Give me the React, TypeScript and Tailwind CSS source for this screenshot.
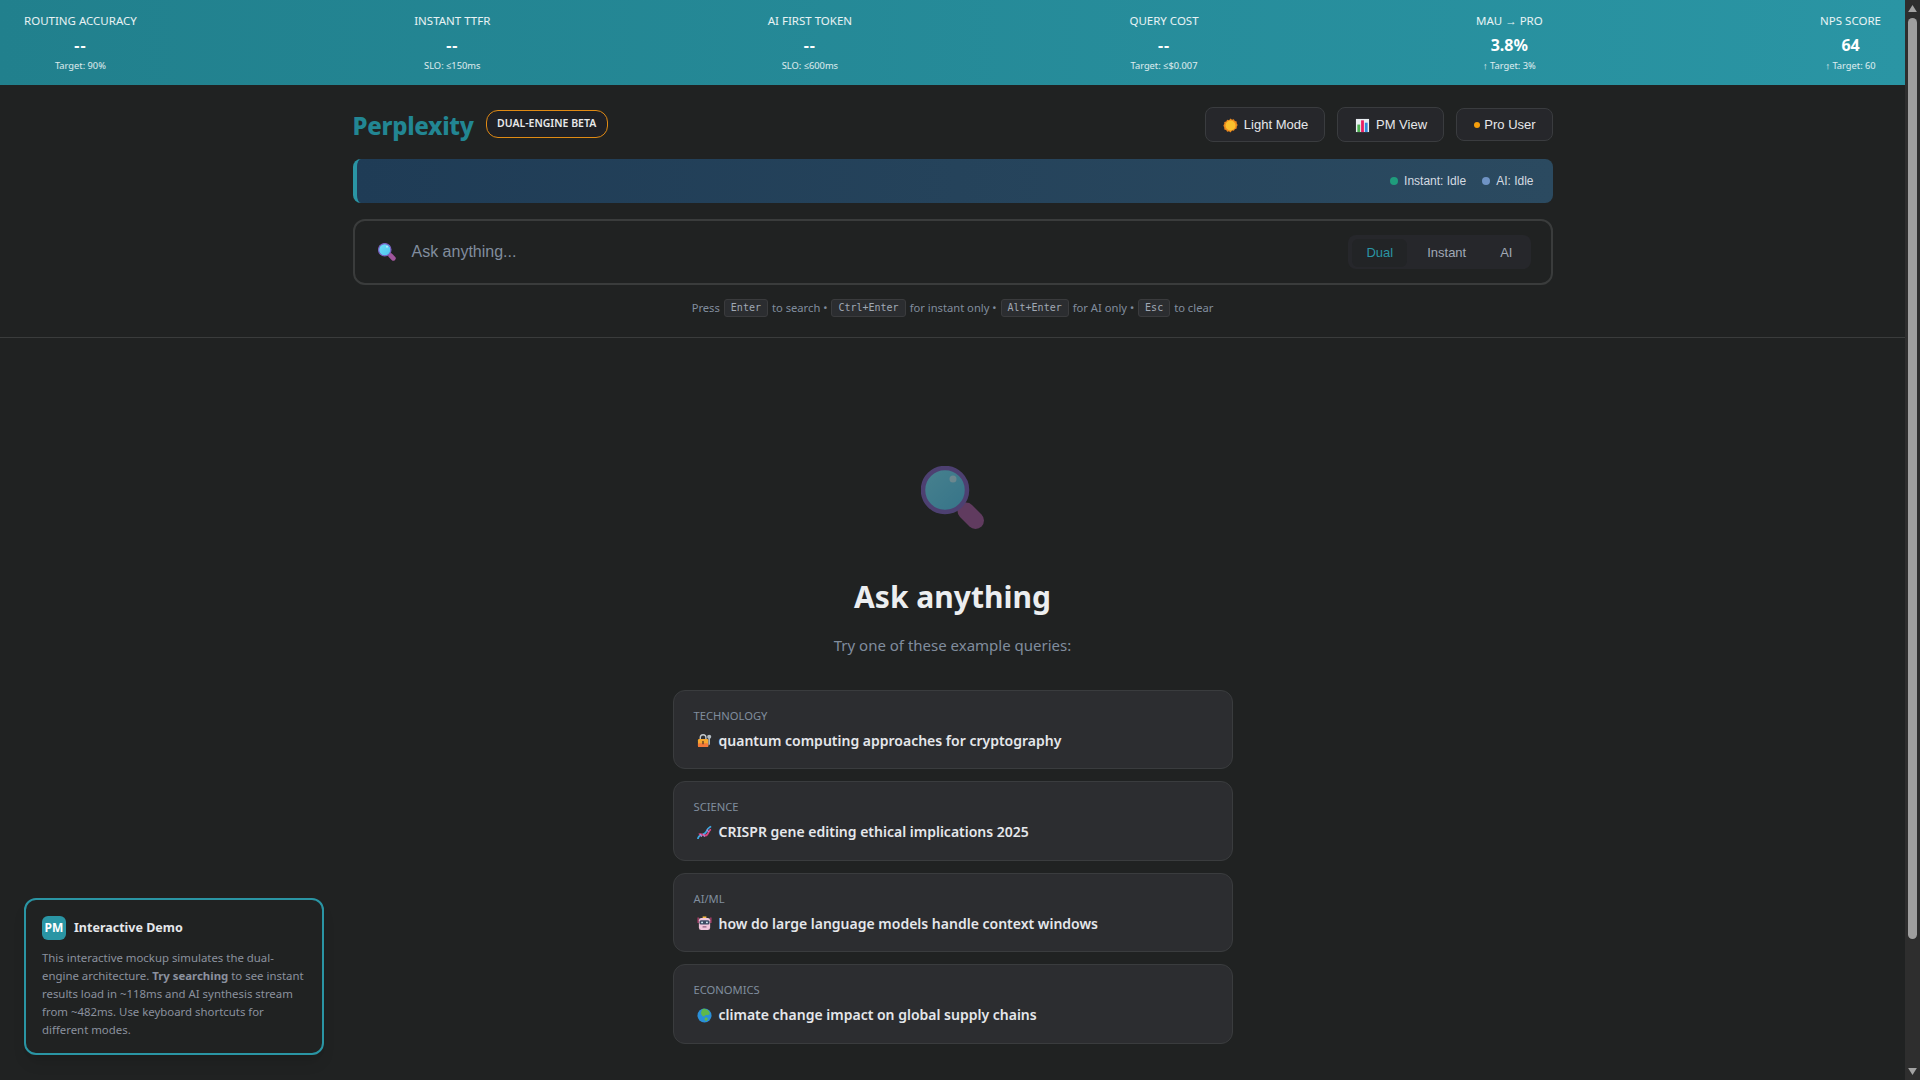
const SANS = "font-['Noto_Sans','Open_Sans',sans-serif]";

const metrics = [
  { label: <>Routing Accuracy</>, value: "--", sub: "Target: 90%" },
  { label: <>Instant TTFR</>, value: "--", sub: "SLO: ≤150ms" },
  { label: <>AI First Token</>, value: "--", sub: "SLO: ≤600ms" },
  { label: <>Query Cost</>, value: "--", sub: "Target: ≤$0.007" },
  { label: <>MAU <span className="font-['Liberation_Sans',sans-serif]">→</span> Pro</>, value: "3.8%", sub: "↑ Target: 3%" },
  { label: <>NPS Score</>, value: "64", sub: "↑ Target: 60" },
];

function Magnifier({ className, id }: { className: string; id: string }) {
  return (
    <svg viewBox="0 0 64 64" className={className}>
      <defs>
        <linearGradient id={id} x1="0" y1="0" x2="1" y2="1">
          <stop offset="0" stopColor="#6fe0fa" />
          <stop offset="1" stopColor="#4cc4ee" />
        </linearGradient>
      </defs>
      <line x1="45" y1="45" x2="54.500" y2="54.500" stroke="#a0559c" strokeWidth="17" strokeLinecap="round" />
      <circle cx="24" cy="24" r="22" fill={`url(#${id})`} stroke="#7a5fc0" strokeWidth="4.500" />
      <circle cx="32" cy="13" r="3.500" fill="#ffffff" fillOpacity="0.55" />
    </svg>
  );
}

function Sun() {
  return (
    <svg viewBox="0 0 16 16" className="h-[15px] w-[15px] shrink-0">
      <path d="M8 0.500l1.600 1.300 2-.5 1 1.800 2 .6 0 2 1 1.800-1 1.800 0 2-2 .6-1 1.800-2-.5L8 15.500l-1.600-1.300-2 .5-1-1.800-2-.6 0-2L.4 8l1-1.800 0-2 2-.6 1-1.800 2 .5z" fill="#ee8a1e" />
      <circle cx="8" cy="8" r="5.300" fill="#fbc02d" />
    </svg>
  );
}

function Chart() {
  return (
    <svg viewBox="0 0 16 16" className="h-[15px] w-[15px] shrink-0">
      <rect x="1" y="1" width="14" height="14" fill="#e9eef2" />
      <rect x="2.500" y="7" width="3" height="8" fill="#4caf50" />
      <rect x="6.500" y="2.500" width="3" height="12.500" fill="#e91e63" />
      <rect x="10.500" y="5" width="3" height="10" fill="#2f88d8" />
    </svg>
  );
}

function LockKey() {
  return (
    <svg viewBox="0 0 16 16" className="h-[15px] w-[15px] shrink-0">
      <path d="M3.500 7V4.800a3 3 0 0 1 6 0V7" fill="none" stroke="#c3c8cc" strokeWidth="1.500" />
      <rect x="1" y="6.500" width="11" height="8.500" rx="1.200" fill="#f7a72e" />
      <rect x="1" y="11" width="11" height="4" rx="1.200" fill="#f4793a" />
      <rect x="5.600" y="8.500" width="1.600" height="3.500" fill="#6b4423" />
      <circle cx="13" cy="4" r="2.200" fill="#b4bcc2" />
      <rect x="12.200" y="5" width="1.600" height="7.500" fill="#b4bcc2" />
    </svg>
  );
}

function Dna() {
  return (
    <svg viewBox="0 0 16 16" className="h-[15px] w-[15px] shrink-0">
      <path d="M1 15C1 9 8 12 10 7S13 3 15 1.500" fill="none" stroke="#3fa7e0" strokeWidth="1.900" />
      <path d="M2 10C6 8 8 14 11 10S13 5 15 5" fill="none" stroke="#d9437e" strokeWidth="1.900" />
      <path d="M3.500 9.500l1.500 3M7 9.500l1 3M10.500 5l2 2.500" stroke="#b58ad6" strokeWidth="1.200" />
    </svg>
  );
}

function Robot() {
  return (
    <svg viewBox="0 0 16 16" className="h-[15px] w-[15px] shrink-0">
      <rect x="6" y="0.500" width="4" height="2" fill="#f5b942" />
      <path d="M1.200 1.500v6M14.800 1.500v6" stroke="#d9437e" strokeWidth="1.100" />
      <rect x="2" y="2" width="12" height="13" rx="2.500" fill="#f0c6dc" />
      <rect x="2.600" y="4.500" width="10.800" height="4.600" rx="1.600" fill="#3b4a63" />
      <circle cx="5.400" cy="6.800" r="1" fill="#d8eef8" />
      <circle cx="10.600" cy="6.800" r="1" fill="#d8eef8" />
      <rect x="5.800" y="11" width="4.400" height="1.300" rx="0.600" fill="#8d5f7f" />
    </svg>
  );
}

function Globe() {
  return (
    <svg viewBox="0 0 16 16" className="h-[15px] w-[15px] shrink-0">
      <circle cx="8" cy="8" r="7.500" fill="#2a8fd8" />
      <path d="M6 1c2.500-.5 6 .5 7.500 4 .5 1.500-1.500 3-3 2.500C9 7 8.500 8.500 7.500 9 6 9.500 5 7.500 4.500 6.500 4 5 4.500 3 6 1z" fill="#5fb84a" />
      <path d="M8.500 10.500c1-.7 2.500-.5 3 .4.4.9-1 3-2.200 3-1 0-1.500-2.500-.8-3.400z" fill="#5fb84a" />
    </svg>
  );
}

const cards = [
  { cat: "Technology", icon: <LockKey />, text: "quantum computing approaches for cryptography" },
  { cat: "Science", icon: <Dna />, text: "CRISPR gene editing ethical implications 2025" },
  { cat: "AI/ML", icon: <Robot />, text: "how do large language models handle context windows" },
  { cat: "Economics", icon: <Globe />, text: "climate change impact on global supply chains" },
];

function Kbd({ children }: { children: string }) {
  return (
    <kbd className="mx-[1px] inline-flex h-[18px] items-center rounded-[3px] border border-[#3a3b3d] bg-[#2b2d30] px-[6px] font-['DejaVu_Sans_Mono',monospace] text-[10px] leading-none text-[#a0a8b4]">
      {children}
    </kbd>
  );
}

function Scrollbar() {
  return (
    <div className="flex h-full w-[15px] shrink-0 flex-col items-center bg-[#2e2e2e]">
      <svg viewBox="0 0 10 8" className="mt-[5px] h-[7px] w-[9px] shrink-0">
        <path d="M5 0L10 8H0z" fill="#a3a3a3" />
      </svg>
      <div className="mt-[6px] h-[921px] w-[9px] shrink-0 rounded-full bg-[#9f9f9f]" />
      <svg viewBox="0 0 10 8" className="mt-[129px] h-[7px] w-[9px] shrink-0">
        <path d="M0 0H10L5 8z" fill="#a3a3a3" />
      </svg>
    </div>
  );
}

export default function App() {
  return (
    <div className={`flex h-screen overflow-hidden bg-[#202222] ${SANS}`}>
      <div className="relative flex min-w-0 flex-1 flex-col">
        <div className="flex h-[85px] shrink-0 items-start justify-between bg-gradient-to-r from-[#21808d] to-[#2a95a4] px-6 pt-[13px] text-white">
          {metrics.map((m) => (
            <div key={m.sub} className="flex flex-col items-center">
              <div className="text-[11.5px] uppercase leading-[16px] text-white/90">{m.label}</div>
              <div className={`mt-[5px] text-[16px] font-bold leading-[22px] ${m.value === "--" ? "tracking-[1px]" : ""}`}>{m.value}</div>
              <div className="mt-[3px] text-[9.3px] leading-[13px] text-white/85">{m.sub}</div>
            </div>
          ))}
        </div>

        <div className="shrink-0 border-b border-[#3a3c3c] pb-[20px] pt-[22px]">
          <div className="mx-auto w-[1200px]">
            <div className="flex h-[35px] items-center justify-between">
              <div className="flex items-center gap-3">
                <div className="mt-[2px] text-[24px] font-extrabold leading-[30px] tracking-[-0.3px] text-[#228693]">Perplexity</div>
                <div className="mt-[-2px] flex h-[28px] w-[122px] items-center justify-center rounded-[12px] border border-[#e08a14] bg-[#1f2025] text-[10.5px] font-semibold uppercase text-[#e8e8ea]">
                  Dual-Engine Beta
                </div>
              </div>
              <div className="flex items-center gap-3 font-['Liberation_Sans',sans-serif] text-[13px] text-[#e6e7ea]">
                <div className="flex h-[35px] w-[120px] items-center justify-center gap-[6px] rounded-lg border border-[#3a3c3f] bg-[#26272b] pl-[2px] pt-[1px]">
                  <Sun /> Light Mode
                </div>
                <div className="flex h-[35px] w-[107px] items-center justify-center gap-[6px] rounded-lg border border-[#3a3c3f] bg-[#26272b] pl-[2px] pt-[1px]">
                  <Chart /> PM View
                </div>
                <div className="flex h-[33px] w-[97px] items-center justify-center gap-[4px] rounded-lg border border-[#3a3c3f] bg-[#26272b] pl-[2px]">
                  <span className="h-[6px] w-[6px] rounded-full bg-[#f59e0b]" /> Pro User
                </div>
              </div>
            </div>

            <div className="mt-[17px] flex h-[44px] items-center justify-end gap-4 rounded-lg border-l-4 border-[#2a95a4] bg-gradient-to-r from-[#1f3c56] to-[#2b4a60] pr-[19px] font-['Liberation_Sans',sans-serif] text-[12px] text-[#d5dbe2]">
              <div className="flex items-center gap-[6px]">
                <span className="h-2 w-2 rounded-full bg-[#1f9c7c]" /> Instant: Idle
              </div>
              <div className="flex items-center gap-[6px]">
                <span className="h-2 w-2 rounded-full bg-[#6f93c4]" /> AI: Idle
              </div>
            </div>

            <div className="mt-4 flex h-[66px] items-center justify-between rounded-xl border-2 border-[#3a3c3c] pl-[23px] pr-[20px]">
              <div className="flex items-center gap-[16px]">
                <Magnifier id="g1" className="h-[18px] w-[18px]" />
                <span className="font-['Liberation_Sans',sans-serif] text-[16px] text-[#808d9e]">Ask anything...</span>
              </div>
              <div className="flex h-[34px] items-center gap-[6px] rounded-lg bg-[#26272b] px-1 pt-[1px] font-['Liberation_Sans',sans-serif] text-[13px] text-[#a0a9b6]">
                <div className="flex h-[28px] items-center rounded-md bg-[#222426] px-[14px] text-[#2a95a4]">Dual</div>
                <div className="flex h-[28px] items-center px-[14px]">Instant</div>
                <div className="flex h-[28px] items-center px-[14px]">AI</div>
              </div>
            </div>

            <div className="mt-[14px] flex h-[18px] items-center justify-center gap-[3px] text-[11.2px] text-[#808d9e]">
              <span>Press</span> <Kbd>Enter</Kbd> <span>to search •</span> <Kbd>Ctrl+Enter</Kbd>{" "}
              <span>for instant only •</span> <Kbd>Alt+Enter</Kbd> <span>for AI only •</span> <Kbd>Esc</Kbd>{" "}
              <span>to clear</span>
            </div>
          </div>
        </div>

        <div className="flex flex-col items-center pt-[128px]">
          <div className="h-[64px] w-[64px] opacity-50">
            <Magnifier id="g2" className="h-[64px] w-[64px]" />
          </div>
          <div className="mt-[43px] text-[30px] font-bold leading-[48px] text-[#eceef0]">Ask anything</div>
          <div className="mt-[12px] text-[15px] leading-[24px] text-[#808d9e]">Try one of these example queries:</div>
          <div className="mt-[32.5px] flex w-[560px] flex-col gap-3">
            {cards.map((c) => (
              <div key={c.cat} className="h-[79.5px] rounded-xl border border-[#3a3c3e] bg-[#2c2d30] px-5 pt-[16px]">
                <div className="text-[11.2px] uppercase leading-[18px] text-[#808d9e]">{c.cat}</div>
                <div className="mt-[5px] flex items-center gap-[7px] pl-[3px] text-[14px] font-semibold leading-[22px] text-[#e5e7eb]">
                  {c.icon}
                  <span>{c.text}</span>
                </div>
              </div>
            ))}
          </div>
        </div>

        <div className="absolute bottom-[25px] left-6 w-[300px] rounded-xl border-2 border-[#2a95a4] bg-[#202222] px-4 pb-[14px] pt-4 shadow-lg">
          <div className="flex items-center gap-2">
            <div className="flex h-6 w-6 items-center justify-center rounded-md bg-[#2a95a4] text-[12px] font-bold text-white">PM</div>
            <div className="text-[12.500px] font-bold text-[#e5e7eb]">Interactive Demo</div>
          </div>
          <p className="mt-[9px] text-[11.4px] leading-[18px] text-[#8b919e]">
            This interactive mockup simulates the dual-engine architecture. <b className="font-bold">Try searching</b> to see instant results load in ~118ms and AI synthesis stream from ~482ms. Use keyboard shortcuts for different modes.
          </p>
        </div>
      </div>
      <Scrollbar />
    </div>
  );
}
